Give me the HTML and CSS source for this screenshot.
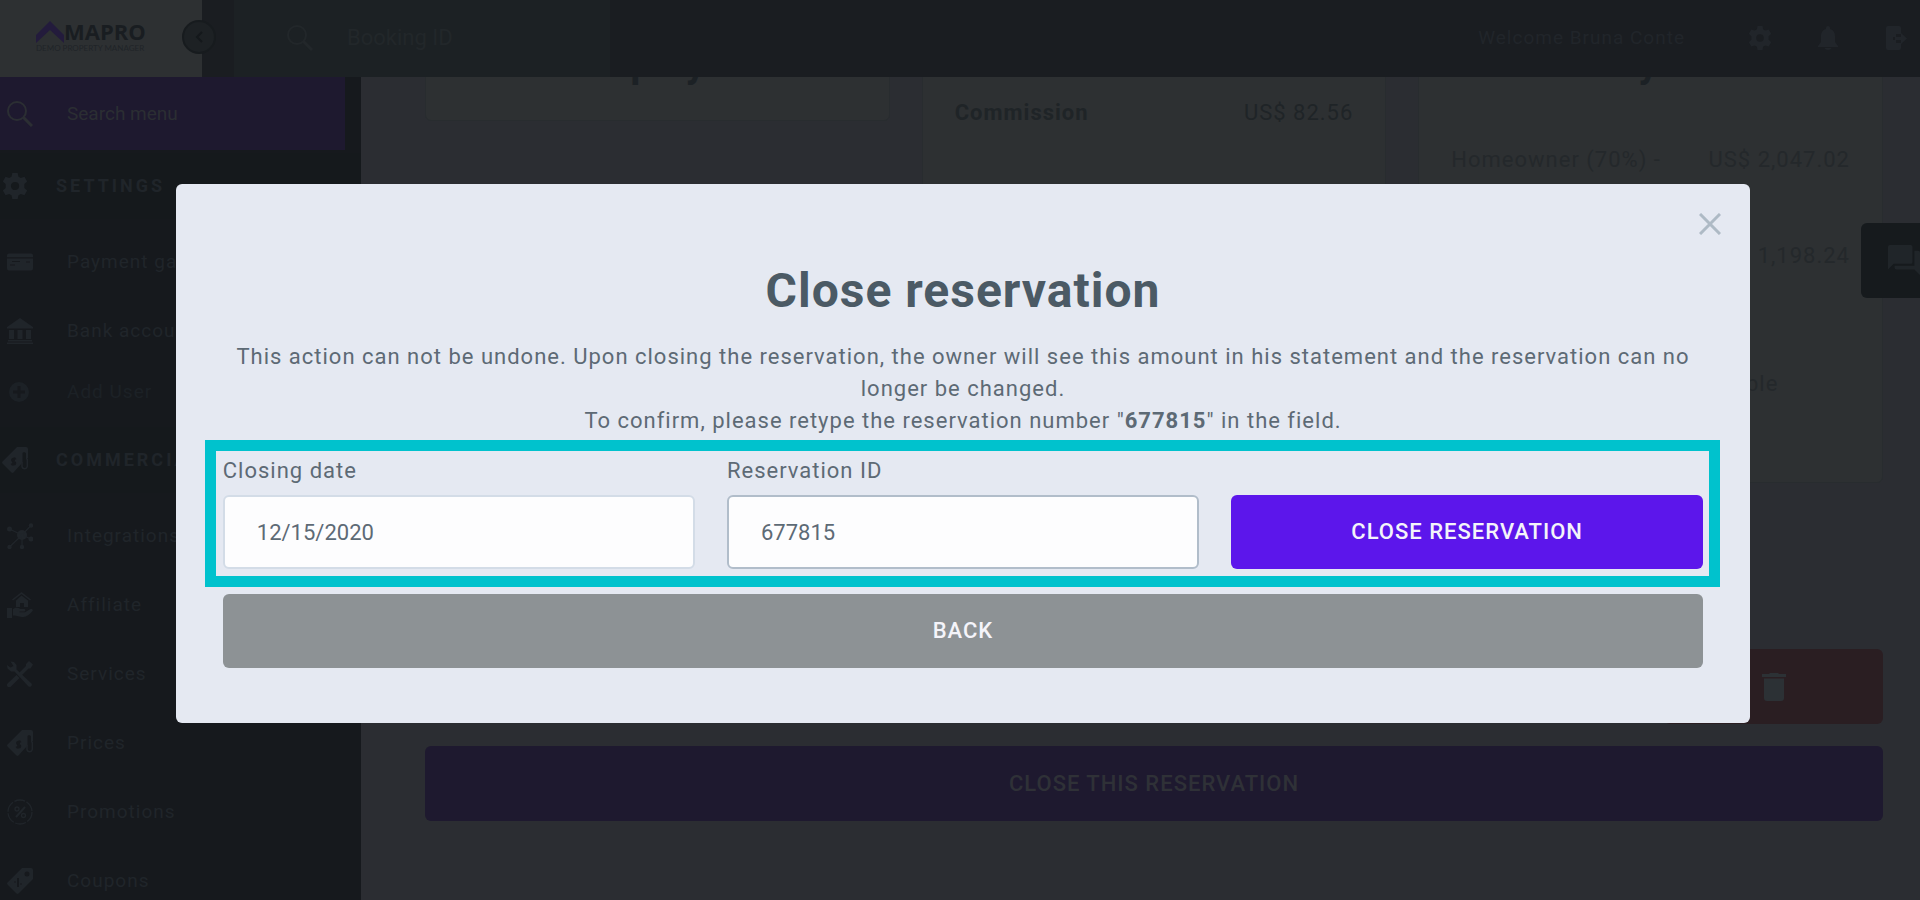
FILE: index.html
```html
<!DOCTYPE html>
<html lang="en">
<head>
<meta charset="utf-8">
<title>Close reservation</title>
<meta name="viewport" content="width=device-width, initial-scale=1">
<link rel="stylesheet" href="styles.css">
</head>
<body>
<svg class="sprite" aria-hidden="true">
  <symbol id="i-search" viewBox="0 0 26 26"><g fill="none" stroke="currentColor" stroke-width="2"><circle cx="10" cy="10" r="9"/><path d="M16.500 16.500L25 25" stroke-width="3"/></g></symbol>
  <symbol id="i-gear" viewBox="0 0 24 24"><path fill="currentColor" fill-rule="evenodd" d="M9.500 0h5l.7 3.400 2.200 1.200 3.300-1.100 2.500 4.300-2.600 2.400v3.600l2.600 2.400-2.500 4.300-3.300-1.100-2.200 1.200-.7 3.400h-5l-.7-3.400-2.200-1.200-3.300 1.100-2.500-4.300 2.600-2.400v-3.600L.8 7.800l2.500-4.300 3.300 1.100 2.200-1.200zM12 8.200a3.800 3.800 0 100 7.600 3.800 3.800 0 000-7.600z"/></symbol>
  <symbol id="i-card" viewBox="0 0 26 26"><path fill="currentColor" fill-rule="evenodd" d="M2 4.500h22a2 2 0 012 2v1.800H0V6.500a2 2 0 012-2zM0 9.500h26v10a2 2 0 01-2 2H2a2 2 0 01-2-2zm5 2.500v1h8v-1zm-2 3.500v1h5v-1zm16-3v1h4v-1z"/></symbol>
  <symbol id="i-bank" viewBox="0 0 26 26"><path fill="currentColor" d="M13 0l13 9v1.500H0V9zM2 12h5v9H2zm8.500 0h5v9h-5zm8.500 0h5v9h-5zM1 22h24v1.500H1zM0 24.500h26V26H0z"/></symbol>
  <symbol id="i-plus" viewBox="0 0 26 26"><path fill="currentColor" fill-rule="evenodd" d="M12 3a10 10 0 100 20 10 10 0 000-20zm-1.500 4h3v4.500H18v3h-4.500V19h-3v-4.500H6v-3h4.500z"/></symbol>
  <symbol id="i-price" viewBox="0 0 26 26"><path fill="currentColor" d="M15 0h9a2 2 0 012 2v9l-2 2V6l-2-1-1.500 1v9.500L11.500 25.500a1.500 1.500 0 01-2 0L.5 16.500a1.500 1.500 0 010-2z"/><path fill="none" stroke="currentColor" stroke-width="1.500" d="M20 15v4.500a2.700 2.700 0 005.300 0V12"/><path class="cut" d="M13.500 12.500c-1-1.500-3.500-1-3.500.6 0 2 3.500 1.300 3.300 3.200-.2 1.600-2.800 1.800-3.800.2M12.800 10.500l-2.500 8"/></symbol>
  <symbol id="i-hub" viewBox="0 0 26 26"><g fill="currentColor"><circle cx="15" cy="12" r="5"/><circle cx="2.500" cy="6" r="2.500"/><circle cx="24" cy="2.500" r="2.200"/><circle cx="24" cy="16" r="2.500"/><circle cx="2.500" cy="24" r="2.200"/><circle cx="15" cy="24" r="2.200"/></g><path fill="none" stroke="currentColor" stroke-width="1.200" d="M2.500 6L15 12l9-9.500M24 16l-9-4L2.500 24M15 12v12"/></symbol>
  <symbol id="i-hand" viewBox="0 0 26 26"><path fill="currentColor" d="M14.500 0L24 7.500l-1 1L14.500 2 6 8.500l-1-1zM14.500 3.500L21 8.500V15h-4v-4h-4v4H9V8.500zM0 16h5v10H0zM6 17c3-2 5-1.500 7.500 0H17c1.800 0 1.800 2.500 0 2.500h-4.500v.8H18l5-3c2-1 3.500.6 2.500 1.700-3 3.500-6 6-9 6-5 0-6-1.500-10.500-1.500z"/></symbol>
  <symbol id="i-tools" viewBox="0 0 26 26"><path fill="currentColor" d="M3.500.5L7 1l2.500 3v4.500l15 14a2.200 2.200 0 01-3 3L7.500 10.500H4L.5 7.500 0 4l3.500 2.500L6.500 5zM22 0l4 3.500-2.500 4h-2L15 14l-2.500-2.500L19 5V3zM9.500 14l3 3-8.500 8.500a2.300 2.300 0 01-3.500-3z"/></symbol>
  <symbol id="i-promo" viewBox="0 0 26 26"><g fill="none" stroke="currentColor" stroke-width="1.300"><circle cx="13" cy="13" r="12" stroke-dasharray="11 1.600"/><path d="M18 8L9 18" stroke-width="2"/><circle cx="10" cy="10" r="2"/><circle cx="16.500" cy="16.500" r="2"/></g></symbol>
  <symbol id="i-coupon" viewBox="0 0 26 26"><path fill="currentColor" fill-rule="evenodd" d="M15 0h9a2 2 0 012 2v9L11.500 25.500a1.500 1.500 0 01-2 0L.5 16.500a1.500 1.500 0 010-2zM20 3.500a2.500 2.500 0 100 5 2.500 2.500 0 000-5z"/><path class="cut" d="M11 10v9M8 13.500v1M14 15.500v1"/></symbol>
  <symbol id="i-bell" viewBox="0 0 24 24"><path fill="currentColor" d="M12 0c1.200 0 2 .8 2 2v1c3.500 1 5 4 5 7v6l3 4v1H2v-1l3-4v-6c0-3 1.500-6 5-7V2c0-1.200.8-2 2-2zM8.500 22h7c-1 2.500-6 2.500-7 0z"/></symbol>
  <symbol id="i-exit" viewBox="0 0 24 24"><path fill="currentColor" d="M4 0h11a2 2 0 012 2v6h-5v3h-3v3h3v3h5v5a2 2 0 01-2 2H4a2 2 0 01-2-2V2a2 2 0 012-2zM17 7l6 5.500-6 5.500v-4h-6v-3h6z"/></symbol>
  <symbol id="i-chat" viewBox="0 0 34 34"><path fill="currentColor" d="M2 0h22a2 2 0 012 2v16a2 2 0 01-2 2H6l-6 6V2a2 2 0 012-2zM28 6h4a2 2 0 012 2v24l-6-6H9a2 2 0 01-2-2v-2h21z"/></symbol>
  <symbol id="i-trash" viewBox="0 0 24 28"><path fill="currentColor" d="M0 1h7l1-1h8l1 1h7v3H0zM2 5.500h20V25a3 3 0 01-3 3H5a3 3 0 01-3-3z"/></symbol>
</svg>

<div class="app">
  <header class="topbar">
    <div class="brand">
      <div class="brand-row">
        <svg class="brand-mark" viewBox="0 0 28 22"><path fill="currentColor" d="M0 14L14 0l14 14v8L14 9 0 22z"/></svg>
        <span class="brand-name">MAPRO</span>
      </div>
      <span class="brand-sub">DEMO PROPERTY MANAGER</span>
      <button class="collapse" type="button" aria-label="Collapse menu"><svg viewBox="0 0 8 12"><path d="M7 1L2 6l5 5" fill="none" stroke="currentColor" stroke-width="2"/></svg></button>
    </div>
    <div class="booking-search">
      <svg class="icon"><use href="#i-search"/></svg>
      <input type="text" placeholder="Booking ID" aria-label="Booking ID">
    </div>
    <div class="user-tools">
      <span>Welcome Bruna Conte</span>
      <button type="button" aria-label="Settings"><svg><use href="#i-gear"/></svg></button>
      <button type="button" aria-label="Notifications"><svg><use href="#i-bell"/></svg></button>
      <button type="button" aria-label="Sign out"><svg><use href="#i-exit"/></svg></button>
    </div>
  </header>

  <div class="workspace">
    <nav class="sidebar">
      <div class="menu-search">
        <svg class="icon"><use href="#i-search"/></svg>
        <input type="text" placeholder="Search menu" aria-label="Search menu">
      </div>
      <h2 class="section first"><svg class="icon"><use href="#i-gear"/></svg>SETTINGS<span class="dash"></span></h2>
      <ul class="menu">
        <li><a href="#"><svg class="icon"><use href="#i-card"/></svg>Payment gateway</a></li>
        <li><a href="#"><svg class="icon"><use href="#i-bank"/></svg>Bank accounts</a></li>
        <li><a href="#" class="sub"><svg class="icon"><use href="#i-plus"/></svg>Add User</a></li>
      </ul>
      <h2 class="section"><svg class="icon"><use href="#i-price"/></svg>COMMERCIAL</h2>
      <ul class="menu">
        <li><a href="#"><svg class="icon"><use href="#i-hub"/></svg>Integrations</a></li>
        <li><a href="#"><svg class="icon"><use href="#i-hand"/></svg>Affiliate</a></li>
        <li><a href="#"><svg class="icon"><use href="#i-tools"/></svg>Services</a></li>
        <li><a href="#"><svg class="icon"><use href="#i-price"/></svg>Prices</a></li>
        <li><a href="#"><svg class="icon"><use href="#i-promo"/></svg>Promotions</a></li>
        <li><a href="#"><svg class="icon"><use href="#i-coupon"/></svg>Coupons</a></li>
      </ul>
    </nav>

    <main class="content">
      <div class="cards">
        <section class="card"><h3>Employer</h3></section>
        <section class="card totals">
          <div class="row"><strong>Commission</strong><span>US$ 82.56</span></div>
        </section>
        <section class="card split">
          <h3>Money owed</h3>
          <div class="row"><span>Homeowner (70%) -</span><span>US$ 2,047.02</span></div>
          <div class="row"><span>Manager</span><span>US$ 1,198.24</span></div>
          <p class="note">Final amount receivable</p>
        </section>
      </div>
      <button class="wide danger" type="button" aria-label="Delete reservation"><svg><use href="#i-trash"/></svg></button>
      <button class="wide primary-dim" type="button">CLOSE THIS RESERVATION</button>
    </main>
  </div>
</div>

<button class="chat" type="button" aria-label="Chat"><svg><use href="#i-chat"/></svg></button>

<div class="overlay">
  <div class="modal" role="dialog" aria-modal="true" aria-labelledby="modal-title">
    <button class="close" type="button" aria-label="Close"><svg viewBox="0 0 22 22"><path d="M1 1l20 20M21 1L1 21" fill="none" stroke="currentColor" stroke-width="3"/></svg></button>
    <h1 id="modal-title">Close reservation</h1>
    <p>This action can not be undone. Upon closing the reservation, the owner will see this amount in his statement and the reservation can no longer be changed.<br>To confirm, please retype the reservation number "<strong>677815</strong>" in the field.</p>
    <form class="confirm">
      <div class="field">
        <label for="closing-date">Closing date</label>
        <input id="closing-date" type="text" value="12/15/2020">
      </div>
      <div class="field">
        <label for="reservation-id">Reservation ID</label>
        <input id="reservation-id" class="active" type="text" value="677815">
      </div>
      <button class="action submit" type="button">CLOSE RESERVATION</button>
    </form>
    <button class="action back" type="button">BACK</button>
  </div>
</div>
</body>
</html>
```

FILE: styles.css
```css
* { box-sizing: border-box; }

body {
  margin: 0;
  height: 100vh;
  overflow: hidden;
  background: #2b2d32;
  color: #202529;
  font-family: Roboto, "Liberation Sans", sans-serif;
  font-size: 22px;
  line-height: 32px;
  letter-spacing: 1px;
}

button, input { font: inherit; color: inherit; border: 0; background: none; padding: 0; }
button { letter-spacing: inherit; }
input { min-width: 0; width: 100%; letter-spacing: 0; }
input::placeholder { color: inherit; opacity: 1; }
h1, h2, h3, p, ul { margin: 0; padding: 0; }
svg { display: block; }

.sprite { position: absolute; width: 0; height: 0; }
.cut { fill: none; stroke: #16191d; stroke-width: 2; }
.icon { width: 26px; height: 26px; flex: none; }

.app { height: 100vh; display: flex; flex-direction: column; }

/* Top bar */
.topbar { height: 77px; flex: none; display: flex; background: #1a1d21; }
.brand {
  position: relative;
  width: 202px;
  padding: 21px 0 0 36px;
  background: #2d3032;
  color: #191d21;
}
.brand-row { display: flex; align-items: flex-end; height: 22px; }
.brand-mark { width: 28px; height: 22px; color: #231b3c; }
.brand-name { font: 700 22px/24px "Open Sans", sans-serif; letter-spacing: 0; }
.brand-sub { display: block; font: 8px/11px Lato, sans-serif; letter-spacing: 0; white-space: nowrap; color: #202428; }
.collapse {
  position: absolute;
  top: 20px;
  right: -14px;
  width: 34px;
  height: 34px;
  border: 2px solid #171b1e;
  border-radius: 50%;
  background: #1d2124;
  color: #14181b;
  display: grid;
  place-items: center;
}
.collapse svg { width: 8px; height: 12px; }
.booking-search {
  width: 376px;
  margin-left: 32px;
  padding: 0 0 2px 53px;
  display: flex;
  align-items: center;
  gap: 34px;
  background: #1c2124;
  color: #22272a;
}
.user-tools {
  margin-left: auto;
  padding: 0 12px 2px 0;
  display: flex;
  align-items: center;
  font-size: 19px;
  color: #21252a;
}
.user-tools svg { width: 24px; height: 24px; }
.user-tools button { margin-left: 44px; }
.user-tools span { margin-right: 19px; }

/* Sidebar */
.workspace { flex: 1; min-height: 0; display: flex; overflow: hidden; }
.sidebar { width: 361px; flex: none; background: #16191d; color: #20252a; font-size: 19px; overflow: hidden; }
.menu-search {
  width: 345px;
  height: 73px;
  padding-left: 7px;
  display: flex;
  align-items: center;
  gap: 34px;
  background: #1e192f;
  color: #2b2e33;
}
.section {
  height: 66px;
  padding: 0 40px 0 2px;
  display: flex;
  align-items: center;
  gap: 28px;
  background: #15191c;
  font-size: 18px;
  font-weight: 700;
  letter-spacing: 3px;
}
.section.first { margin-top: 3px; }
.dash { margin-left: auto; width: 12px; height: 2px; background: #1d2126; }
.menu { list-style: none; padding: 8px 0; }
.menu a {
  height: 69px;
  padding-left: 7px;
  display: flex;
  align-items: center;
  gap: 34px;
  color: inherit;
  text-decoration: none;
  white-space: nowrap;
}
.menu a.sub { height: 54px; color: #1c2126; }

/* Reservation page */
.content { flex: 1; min-width: 0; padding: 0 37px 0 64px; display: flex; flex-direction: column; overflow: hidden; }
.cards { margin-top: -64px; display: grid; grid-template-columns: repeat(3, 1fr); gap: 32px; align-items: start; }
.card { padding: 26px 32px 32px; border: 1px solid #282c2f; border-radius: 6px; background: #2d3032; }
.card h3 { font-size: 40px; line-height: 48px; letter-spacing: 0; text-align: center; color: #1c2125; white-space: nowrap; }
.row { display: flex; justify-content: space-between; }
.totals { padding-top: 83px; padding-bottom: 160px; color: #1f2427; }
.split { color: #24282b; padding-bottom: 82px; }
.split .row { margin-top: 56px; }
.split .row + .row { margin-top: 64px; }
.note { margin-top: 96px; text-align: center; }
.wide { height: 75px; flex: none; border-radius: 6px; }
.danger { width: 219px; margin: 166px 0 22px auto; background: #2a1e22; color: #2c3135; display: grid; place-items: center; }
.danger svg { width: 24px; height: 28px; }
.primary-dim { background: #1e192f; color: #2f3137; font-weight: 500; }

.chat {
  position: fixed;
  top: 223px;
  right: 0;
  width: 59px;
  height: 75px;
  padding-left: 26px;
  overflow: hidden;
  border-radius: 6px 0 0 6px;
  background: #161a1d;
  color: #202529;
}
.chat svg { width: 34px; height: 32px; }

/* Dialog */
.overlay {
  position: fixed;
  inset: 0;
  padding: 184px 0 0 6px;
  display: flex;
  justify-content: center;
  align-items: flex-start;
}
.modal {
  position: relative;
  width: 82vw;
  padding: 75px 47px 55px;
  border-radius: 6px;
  background: #e5e9f2;
  color: #5d6a75;
}
.modal h1 { font-size: 48px; line-height: 64px; font-weight: 700; text-align: center; color: #4b5a65; }
.modal p { margin: 18px 0 3px; text-align: center; }
.close { position: absolute; top: 29px; right: 29px; color: #aebac5; }
.close svg { width: 22px; height: 22px; }
.confirm {
  margin: 0 -17px 7px -18px;
  padding: 4px 6px 7px 7px;
  border: 11px solid #00c2cd;
  display: grid;
  grid-template-columns: repeat(3, 1fr);
  gap: 32px;
  align-items: end;
}
.field { display: flex; flex-direction: column; gap: 8px; }
.field input {
  height: 74px;
  padding: 0 32px;
  border: 2px solid #d3dce7;
  border-radius: 6px;
  background: #fdfdfe;
}
.field input.active { border-color: #b1bdca; }
.action { height: 74px; border-radius: 6px; color: #f4f4fa; font-weight: 500; }
.submit { background: #5c16eb; }
.back { width: 100%; display: block; background: #8d9295; }
```
